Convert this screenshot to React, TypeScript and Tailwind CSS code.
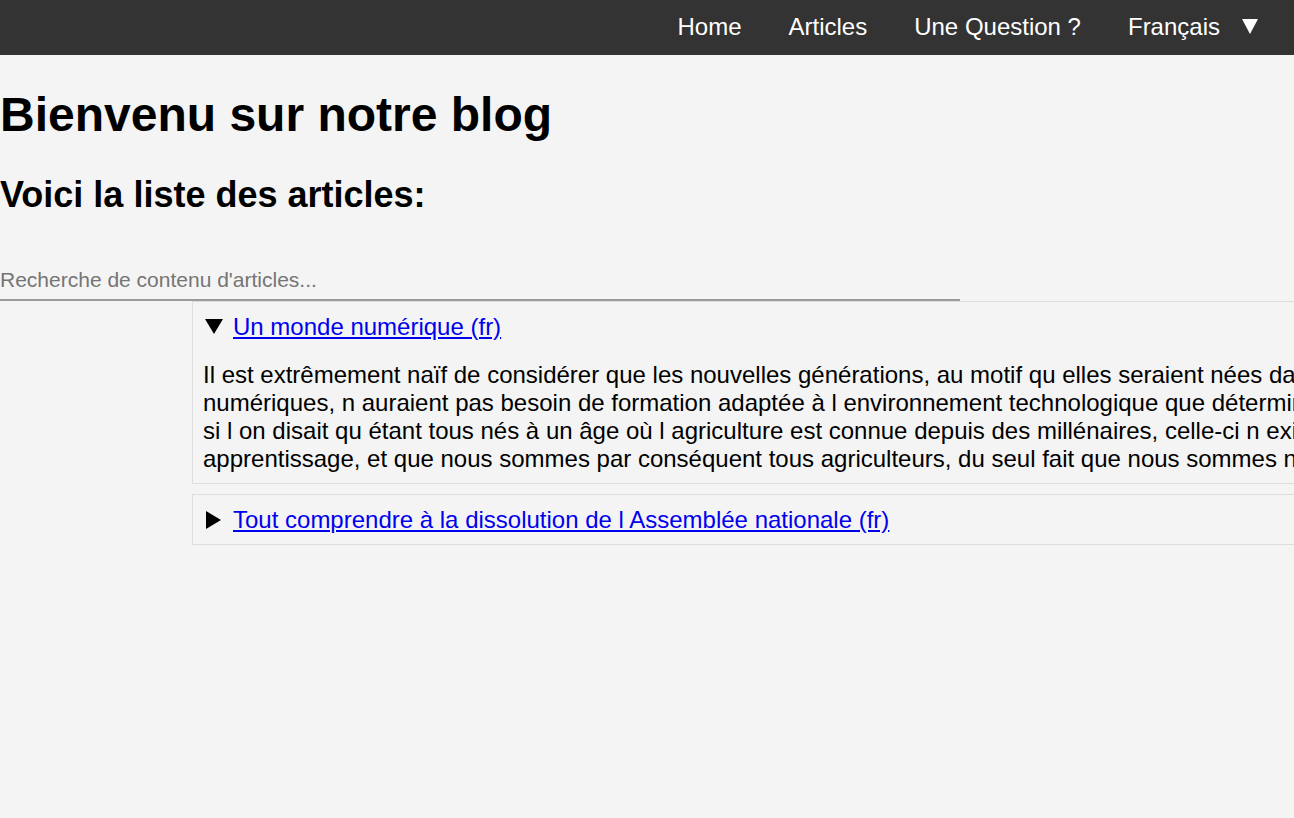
import { useState } from 'react'

const articles = [
  {
    title: 'Un monde numérique (fr)',
    body: "Il est extrêmement naïf de considérer que les nouvelles générations, au motif qu elles seraient nées dans un monde de technologies numériques, n auraient pas besoin de formation adaptée à l environnement technologique que détermine le numérique. C est comme si l on disait qu étant tous nés à un âge où l agriculture est connue depuis des millénaires, celle-ci n exigerait aucune forme d apprentissage, et que nous sommes par conséquent tous agriculteurs, du seul fait que nous sommes nés à cette époque.",
    open: true,
  },
  {
    title: 'Tout comprendre à la dissolution de l Assemblée nationale (fr)',
    body: "La dissolution de l Assemblée nationale met fin au mandat de l ensemble des députés et entraîne de nouvelles élections législatives.",
    open: false,
  },
]

function Nav() {
  return (
    <nav className="flex h-[55px] justify-end bg-[#333333] pt-[13px] pr-[36px] text-[24px] leading-[28px] text-white">
      <ul className="flex gap-[47px]">
        <li><a href="#">Home</a></li>
        <li><a href="#">Articles</a></li>
        <li><a href="#">Une Question ?</a></li>
        <li className="flex items-start">
          <span>Français</span>
          <svg className="ml-[22px] mt-[6px]" width="16" height="15" viewBox="0 0 16 15">
            <polygon points="0,0 16,0 8,15" fill="#fff" />
          </svg>
        </li>
      </ul>
    </nav>
  )
}

export default function App() {
  const [query, setQuery] = useState('')
  const list = articles.filter((a) => a.body.toLowerCase().includes(query.toLowerCase()))

  return (
    <div className="min-h-screen w-full overflow-hidden bg-[#f4f4f4] font-['Liberation_Sans',Arial,sans-serif] text-black">
      <Nav />
      <main>
        <h1 className="mt-[32px] text-[48px] font-bold leading-[55px]">Bienvenu sur notre blog</h1>
        <h2 className="mt-[32px] text-[36px] font-bold leading-[41px]">Voici la liste des articles:</h2>
        <input
          value={query}
          onChange={(e) => setQuery(e.target.value)}
          placeholder="Recherche de contenu d'articles..."
          className="mt-[46px] block h-[40px] w-[960px] border-b-2 border-[#9a9a9a] bg-transparent text-[21px] outline-none placeholder:text-[#757575]"
        />
        <div className="ml-[192px] flex w-[1450px] flex-col gap-[10px]">
          {list.map((a) => (
            <details key={a.title} open={a.open} className="group border border-[#dddddd] p-[10px] text-[24px] leading-[28px]">
              <summary className="flex h-[29px] cursor-pointer list-none items-center pl-[2px] [&::-webkit-details-marker]:hidden">
                <svg className="hidden group-open:block" width="18" height="15" viewBox="0 0 18 15">
                  <polygon points="0,0 18,0 9,15" fill="#000" />
                </svg>
                <svg className="ml-[1px] mr-[2px] block group-open:hidden" width="15" height="18" viewBox="0 0 15 18">
                  <polygon points="0,0 15,9 0,18" fill="#000" />
                </svg>
                <a href="#" className="ml-[10px] text-[#0000ee] underline">{a.title}</a>
              </summary>
              <p className="mt-[20px]">{a.body}</p>
            </details>
          ))}
        </div>
      </main>
    </div>
  )
}
